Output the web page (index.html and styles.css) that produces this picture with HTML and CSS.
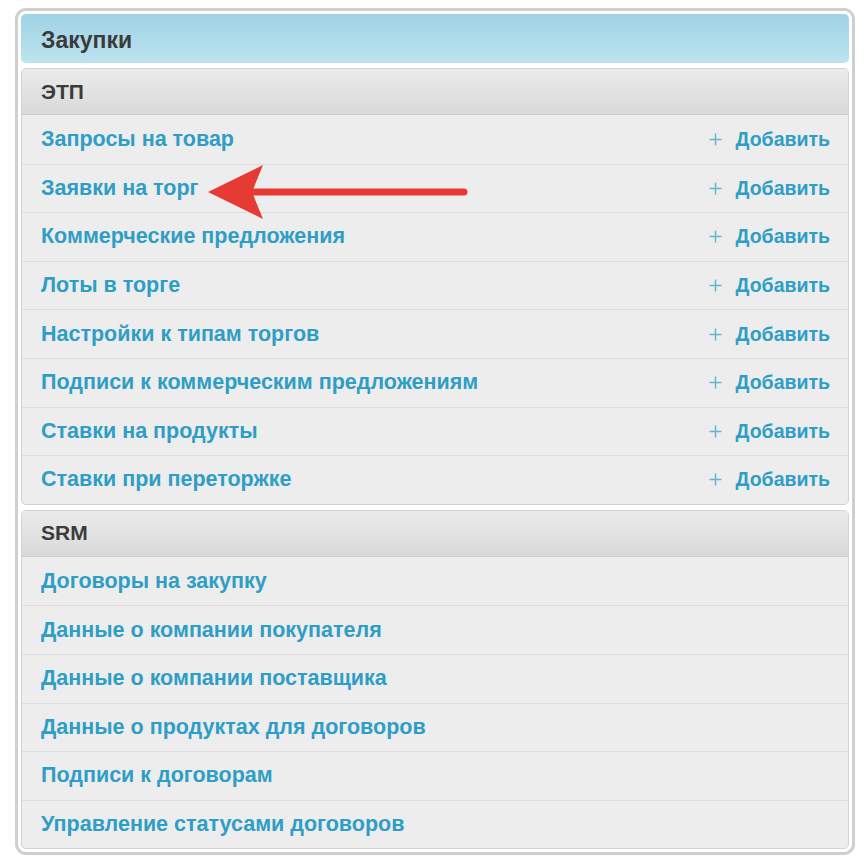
FILE: index.html
```html
<!DOCTYPE html>
<html lang="ru">
<head>
    <meta charset="UTF-8">
    <title>Закупки</title>
    <link rel="stylesheet" href="styles.css">
</head>
<body>
    <div class="frame">
        <div class="module-title">Закупки</div>

        <div class="group">
            <div class="group-title">ЭТП</div>
            <div class="row"><a class="row-link" href="#">Запросы на товар</a><a class="add" href="#"><svg class="plus" viewBox="0 0 12 12"><path d="M6 0.5V11.5M0.5 6H11.5"/></svg>Добавить</a></div>
            <div class="row"><a class="row-link" href="#">Заявки на торг</a><a class="add" href="#"><svg class="plus" viewBox="0 0 12 12"><path d="M6 0.5V11.5M0.5 6H11.5"/></svg>Добавить</a></div>
            <div class="row"><a class="row-link" href="#">Коммерческие предложения</a><a class="add" href="#"><svg class="plus" viewBox="0 0 12 12"><path d="M6 0.5V11.5M0.5 6H11.5"/></svg>Добавить</a></div>
            <div class="row"><a class="row-link" href="#">Лоты в торге</a><a class="add" href="#"><svg class="plus" viewBox="0 0 12 12"><path d="M6 0.5V11.5M0.5 6H11.5"/></svg>Добавить</a></div>
            <div class="row"><a class="row-link" href="#">Настройки к типам торгов</a><a class="add" href="#"><svg class="plus" viewBox="0 0 12 12"><path d="M6 0.5V11.5M0.5 6H11.5"/></svg>Добавить</a></div>
            <div class="row"><a class="row-link" href="#">Подписи к коммерческим предложениям</a><a class="add" href="#"><svg class="plus" viewBox="0 0 12 12"><path d="M6 0.5V11.5M0.5 6H11.5"/></svg>Добавить</a></div>
            <div class="row"><a class="row-link" href="#">Ставки на продукты</a><a class="add" href="#"><svg class="plus" viewBox="0 0 12 12"><path d="M6 0.5V11.5M0.5 6H11.5"/></svg>Добавить</a></div>
            <div class="row"><a class="row-link" href="#">Ставки при переторжке</a><a class="add" href="#"><svg class="plus" viewBox="0 0 12 12"><path d="M6 0.5V11.5M0.5 6H11.5"/></svg>Добавить</a></div>
        </div>

        <div class="group group-srm">
            <div class="group-title">SRM</div>
            <div class="row"><a class="row-link" href="#">Договоры на закупку</a></div>
            <div class="row"><a class="row-link" href="#">Данные о компании покупателя</a></div>
            <div class="row"><a class="row-link" href="#">Данные о компании поставщика</a></div>
            <div class="row"><a class="row-link" href="#">Данные о продуктах для договоров</a></div>
            <div class="row"><a class="row-link" href="#">Подписи к договорам</a></div>
            <div class="row"><a class="row-link" href="#">Управление статусами договоров</a></div>
        </div>

        <!-- стрелка-пометка поверх списка -->
        <svg class="arrow" width="280" height="70" viewBox="0 0 280 70">
            <path class="arrow-line" d="M50 30H261"/>
            <path class="arrow-head" d="M5 30L60 3L49 30L60 57Z"/>
        </svg>
    </div>
</body>
</html>
```

FILE: styles.css
```css
body {
    margin: 0;
    background-color: #fff;
    font-family: "Liberation Sans", Arial, sans-serif;
}

.frame {
    position: relative;
    width: 840px;
    margin: 8px 0 0 15px;
    padding: 3px;
    border: 3px solid #cfcfcf;
    border-radius: 11px;
    box-sizing: border-box;
    background: #fff;
}

.module-title {
    height: 49px;
    padding: 3px 0 0 20px;
    display: flex;
    align-items: center;
    font-size: 23px;
    font-weight: bold;
    color: #3b3b3b;
    background: linear-gradient(#9fd2e4, #bde3ef);
    border-radius: 5px;
    box-sizing: border-box;
}

.group {
    margin-top: 5px;
    border: 1px solid #d2d2d2;
    border-radius: 5px;
    background-color: #ededed;
    overflow: hidden;
}

.group-title {
    height: 45px;
    padding-left: 19px;
    display: flex;
    align-items: center;
    font-size: 21px;
    font-weight: bold;
    color: #3b3b3b;
    background: linear-gradient(#ebebeb, #d9d9d9);
    border-bottom: 1px solid #cdcdcd;
}

.group-srm .group-title {
    height: 45px;
}

.row {
    height: 48.6px;
    padding: 0 18px 0 19px;
    display: flex;
    align-items: center;
    justify-content: space-between;
    border-top: 1px solid #dcdcdc;
    box-sizing: border-box;
}

.group-title + .row {
    border-top: none;
}

.row-link,
.add {
    font-size: 21.5px;
    font-weight: bold;
    color: #2f9ec6;
    text-decoration: none;
}

.add {
    display: flex;
    align-items: center;
    font-size: 19.5px;
}

.plus {
    width: 13px;
    height: 13px;
    margin-right: 14px;
    fill: none;
    stroke: #62b6d4;
    stroke-width: 1.4;
}

.arrow {
    position: absolute;
    left: 185px;
    top: 151px;
    pointer-events: none;
}

.arrow-line {
    stroke: #e53b32;
    stroke-width: 7;
    stroke-linecap: round;
    fill: none;
}

.arrow-head {
    fill: #e53b32;
}
```
